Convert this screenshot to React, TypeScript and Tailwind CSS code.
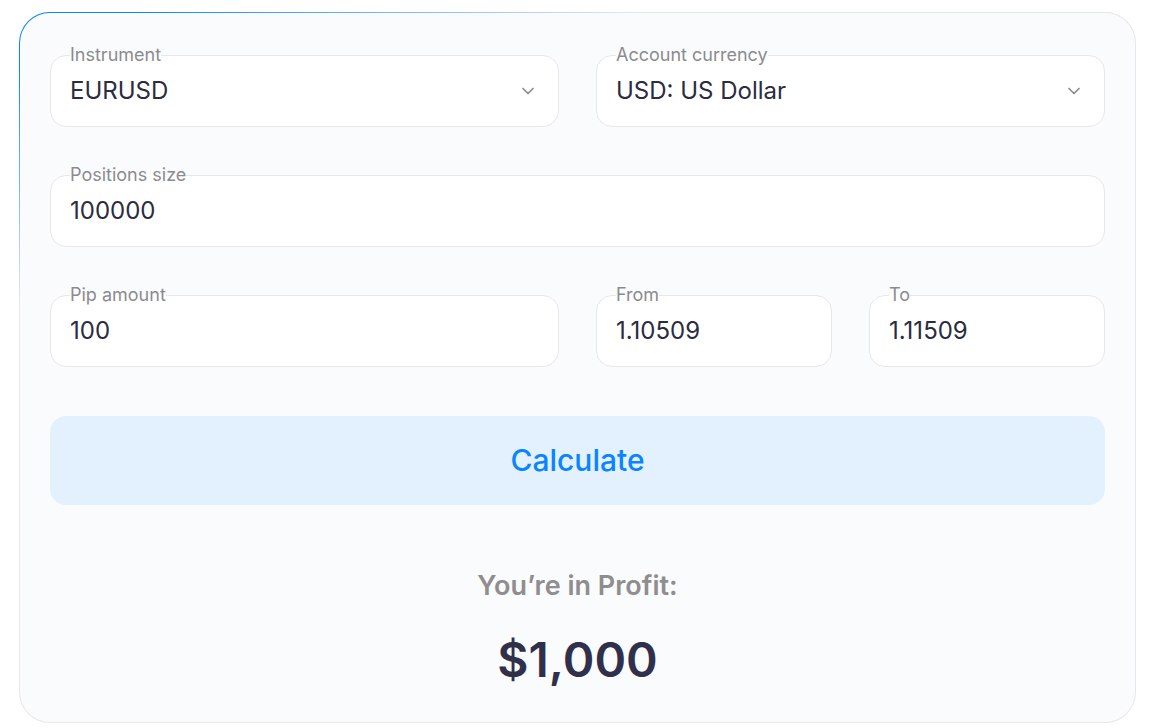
import React from "react";
import { ChevronDown } from "lucide-react";

function Field({
  label,
  value,
  select,
  className = "",
}: {
  label: string;
  value: string;
  select?: boolean;
  className?: string;
}) {
  return (
    <fieldset
      className={`min-w-0 rounded-2xl border border-[#e6e6eb] bg-white pl-[19px] pr-[20px] pt-[8px] pb-[19px] ${className}`}
    >
      <legend className="px-0 text-[18px] leading-6 text-[#8b8b8f]">{label}</legend>
      <div className="flex h-8 items-center justify-between">
        <span className="text-[24px] leading-8 text-[#2b2c40]">{value}</span>
        {select && <ChevronDown size={20} strokeWidth={2} className="text-[#8a8a8e]" />}
      </div>
    </fieldset>
  );
}

export default function App() {
  return (
    <div
      className="min-h-[728px] bg-white pl-[19px] pt-[12px]"
      style={{ fontFamily: "Inter, 'Noto Sans', sans-serif" }}
    >
      <div className="w-[1117px] rounded-[31px] bg-[radial-gradient(620px_290px_at_0_0,#0a84ff_0%,#0a84ff_18%,#e6e6ee_100%)] p-px">
        <div className="rounded-[30px] bg-[#fafbfd] px-[30px] pt-[30px] pb-[38px]">
          <div className="grid grid-cols-2 gap-x-[37px]">
            <Field label="Instrument" value="EURUSD" select />
            <Field label="Account currency" value="USD: US Dollar" select />
          </div>
          <div className="mt-[36px]">
            <Field label="Positions size" value="100000" />
          </div>
          <div className="mt-[36px] grid grid-cols-2 gap-x-[37px]">
            <Field label="Pip amount" value="100" />
            <div className="grid grid-cols-2 gap-x-[37px]">
              <Field label="From" value="1.10509" />
              <Field label="To" value="1.11509" />
            </div>
          </div>
          <button className="mt-[49px] flex h-[89px] w-full items-center justify-center rounded-2xl bg-[#e3f1ff] text-[30px] font-medium text-[#0a84ff]">
            Calculate
          </button>
          <div className="mt-[65px] text-center text-[27px] font-semibold leading-8 text-[#8f8d8d]">
            You’re in Profit:
          </div>
          <div className="mt-[34px] text-center text-[48px] font-semibold leading-[48px] text-[#30304a]">
            $1,000
          </div>
        </div>
      </div>
    </div>
  );
}
